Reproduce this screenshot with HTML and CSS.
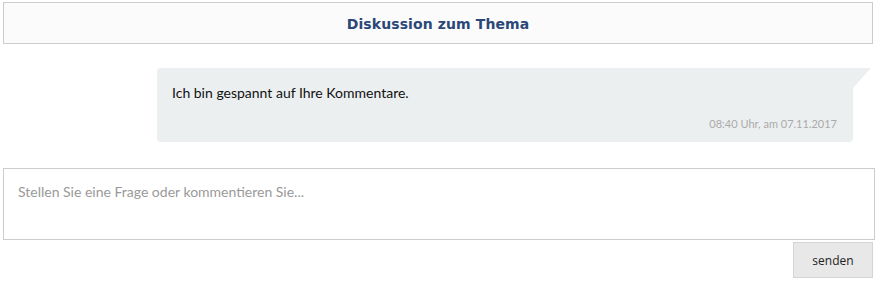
FILE: index.html
```html
<!DOCTYPE html>
<html lang="de">
<head>
<meta charset="utf-8">
<title>Diskussion zum Thema</title>
<link rel="stylesheet" href="styles.css">
</head>
<body>
<div class="page">
  <div class="header">Diskussion zum Thema</div>
  <div class="thread">
    <div class="bubble">
      <div class="msg">Ich bin gespannt auf Ihre Kommentare.</div>
      <div class="time">08:40 Uhr, am 07.11.2017</div>
    </div>
  </div>
  <textarea class="input" placeholder="Stellen Sie eine Frage oder kommentieren Sie..."></textarea>
  <div class="actions"><button class="send">senden</button></div>
</div>
</body>
</html>
```
FILE: styles.css
```css
html, body { margin: 0; padding: 0; background: #fff; }
.page { padding: 2px 2px 0 3px; font-family: Lato, "Liberation Sans", sans-serif; }
.header {
  width: 870px; height: 42px; box-sizing: border-box;
  border: 1px solid #cccccc; background: #fbfbfb;
  display: flex; align-items: center; justify-content: center;
  font-family: "DejaVu Sans", Verdana, sans-serif; font-weight: bold; font-size: 14px;
  letter-spacing: 0.1px;
  color: #2b4777; padding-top: 1px;
}
.thread { padding: 24px 0 0 154px; }
.bubble {
  position: relative; width: 696px; height: 74px; box-sizing: border-box;
  background: #eceff0; border-radius: 4px 0 4px 4px;
  padding: 15px 16px 0 15px;
}
.bubble::after {
  content: ""; position: absolute; left: 100%; top: 0;
  border-top: 20px solid #eceff0; border-right: 18px solid transparent;
}
.msg { font-size: 14px; line-height: 20px; color: #111; }
.time { text-align: right; font-size: 11px; line-height: 15px; color: #aaaaaa; margin-top: 13px; }
.input {
  display: block; margin-top: 26px; width: 872px; height: 72px; box-sizing: border-box;
  border: 1px solid #cccccc; border-radius: 0; padding: 13px 14px; resize: none;
  font-family: Lato, sans-serif; font-size: 14px; line-height: 20px; color: #333; outline: none;
}
.input::placeholder { color: #999999; }
.actions { display: flex; justify-content: flex-end; padding: 2px 2px 0 0; }
.send {
  width: 80px; height: 36px; box-sizing: border-box; margin: 0;
  background: #e8e8e8; border: 1px solid #d4d4d4; border-radius: 0;
  font-family: "Open Sans", sans-serif; font-size: 12px; color: #222; padding: 0;
}
```
